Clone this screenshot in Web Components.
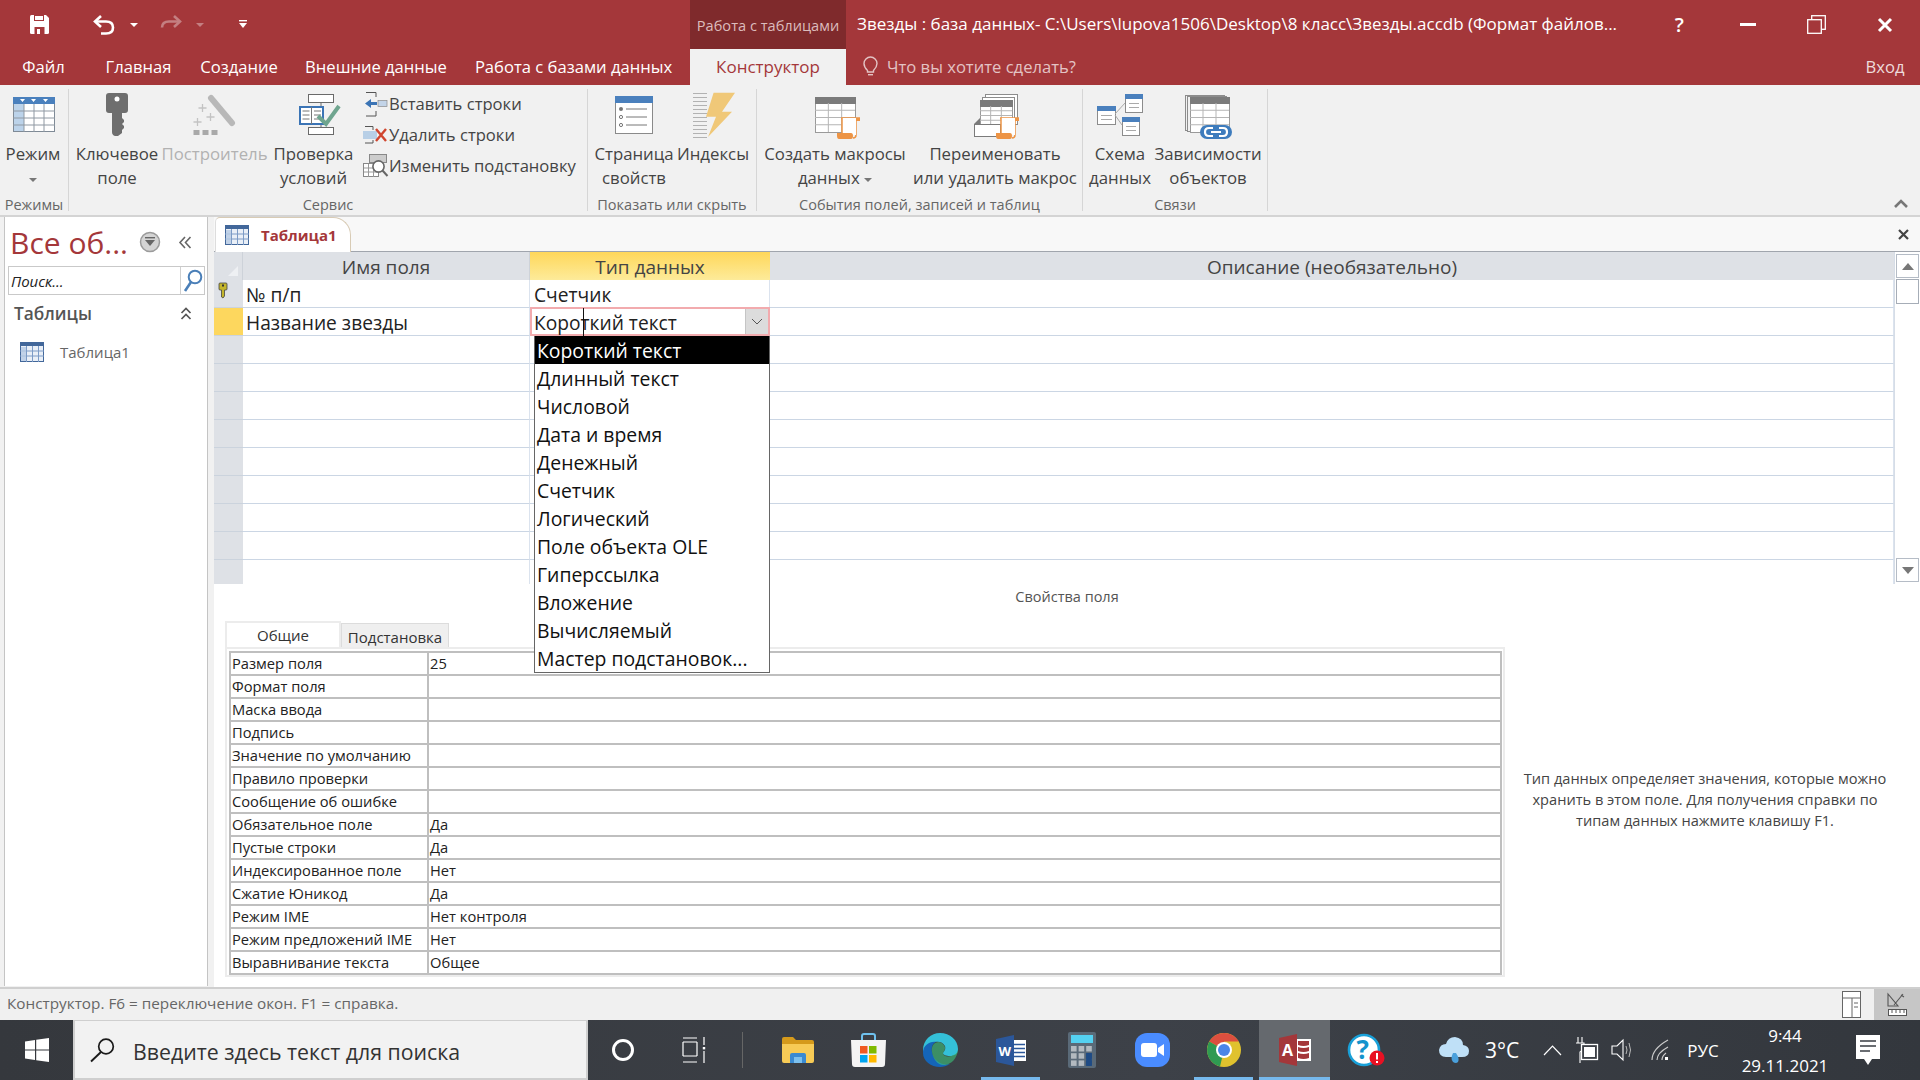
<!DOCTYPE html>
<html lang="ru"><head><meta charset="utf-8"><title>Access</title>
<style>
html,body{margin:0;padding:0;width:1920px;height:1080px;overflow:hidden;background:#fff}
body{font-family:"Open Sans","Noto Sans",sans-serif;color:#444}
</style></head><body>
<ac-app>
  <ac-titlebar></ac-titlebar>
  <ac-tabs></ac-tabs>
  <ac-ribbon>
    <rb-group w="69" label="Режимы" pr="3">
      <rb-btn w="66" icon="sheet">Режим<br><ac-icon name="tri"></ac-icon></rb-btn>
    </rb-group>
    <rb-group w="519" label="Сервис">
      <rb-btn w="96" icon="key">Ключевое<br>поле</rb-btn>
      <rb-btn w="99" icon="wand" disabled>Построитель</rb-btn>
      <rb-btn w="99" icon="valid">Проверка<br>условий</rb-btn>
      <rb-stack>
        <rb-small icon="ins">Вставить строки</rb-small>
        <rb-small icon="del">Удалить строки</rb-small>
        <rb-small icon="look">Изменить подстановку</rb-small>
      </rb-stack>
    </rb-group>
    <rb-group w="169" label="Показать или скрыть">
      <rb-btn w="92" icon="page">Страница<br>свойств</rb-btn>
      <rb-btn w="66" icon="index">Индексы</rb-btn>
    </rb-group>
    <rb-group w="326" label="События полей, записей и таблиц">
      <rb-btn w="156" icon="macro">Создать макросы<br>данных <ac-icon name="tri"></ac-icon></rb-btn>
      <rb-btn w="164" icon="rename">Переименовать<br>или удалить макрос</rb-btn>
    </rb-group>
    <rb-group w="185" label="Связи">
      <rb-btn w="74" icon="schema">Схема<br>данных</rb-btn>
      <rb-btn w="102" icon="deps">Зависимости<br>объектов</rb-btn>
    </rb-group>
    <rb-collapse></rb-collapse>
  </ac-ribbon>
  <ac-body>
    <ac-nav></ac-nav>
    <ac-doc></ac-doc>
  </ac-body>
  <ac-status></ac-status>
  <ac-taskbar></ac-taskbar>
</ac-app>
<script>
const T=(x,y,w,h,f='#fff',s='none',extra='')=>`<rect x="${x}" y="${y}" width="${w}" height="${h}" fill="${f}" stroke="${s}" ${extra}/>`;
const L=(d,s='#888',w=1,extra='')=>`<path d="${d}" fill="none" stroke="${s}" stroke-width="${w}" ${extra}/>`;
const P=(d,f='#888',extra='')=>`<path d="${d}" fill="${f}" ${extra}/>`;
const miniTable=(x,y,w,h,head='#4a80bd')=>T(x+.5,y+.5,w,h,'#fff','#8c8c8c')+T(x,y,w+1,5,head)+L(`M${x+4} ${y+9.5}H${x+w-3}M${x+4} ${y+13.5}H${x+w-3}`,'#aaa');
const grayTable=(x,y,w,h)=>{let g='';for(let i=1;i<3;i++)g+=`M${x+w*i/3} ${y+6}V${y+h}`;for(let i=1;i<4;i++)g+=`M${x} ${y+6+(h-6)*i/4}H${x+w}`;return T(x+.5,y+.5,w,h,'#fff','#9a9a9a')+T(x,y,w+1,7,'#7b7b7b')+L(g,'#b5b5b5')};
const scroll=(x,y)=>L(`M${x+4} ${y+1}H${x+23}M${x+19} ${y+1}V${y+18}Q${x+19} ${y+21} ${x+16} ${y+21}`,'#ed9445',1.5)+T(x+5,y+1,14,17,'#fff')+L(`M${x+5} ${y+1}V${y+16}`,'#ed9445',1.5)+P(`M${x+19} ${y+1}h4v3h-4z`,'#ed9445')+P(`M${x} ${y+16}h14q2 0 2 3t-2 3h-12q-2 0-2-3z`,'#ed9445');
const ICONS={
 save:[19,19,P('M0 1.5Q0 0 1.5 0H16l3 3v14.5Q19 19 17.5 19H1.5Q0 19 0 17.5Z','#fff')+T(4,0,10,6,'#A4373A')+T(5,1,8,4,'#fff')+T(4.5,12,10,7,'#A4373A')+T(7,14,3,5,'#fff')],
 undo:[22,20,L('M8 1L2 6.5L8 12','#fff',2.6)+L('M3 6.5H13Q20 6.5 20 12.5T13 18.5H8','#fff',2.6)],
 redo:[22,20,L('M14 1L20 6.5L14 12','#c47f81',2.6)+L('M19 6.5H9Q2 6.5 2 12.5','#c47f81',2.6)],
 dn:[8,4,P('M0 0H8L4 4Z','#fff')],
 dnf:[8,4,P('M0 0H8L4 4Z','#c47f81')],
 cust:[8,9,T(0,0,8,1.4,'#fff')+P('M0 3H8L4 8Z','#fff')],
 bulb:[15,21,L('M4.5 14.5Q1 11 1 7.5A6.5 6.5 0 0 1 14 7.5Q14 11 10.5 14.5V16H4.5Z','#e3c3c4',1.4)+T(5,18,5,1.4,'#e3c3c4')],
 minw:[16,3,T(0,0,16,3,'#fff')],
 rest:[19,19,T(4.7,.7,13.6,13.6,'none','#fff','stroke-width="1.3"')+T(.7,4.7,13.6,13.6,'#A4373A','#fff','stroke-width="1.3"')],
 closew:[14,14,L('M1 1L13 13M13 1L1 13','#fff',3)],
 tri:[8,4,P('M0 0H8L4 4Z','#777')],
 sheet:[48,48,T(4.5,6.5,41,34,'#fff','#7f8a96')+T(4,6,42,7,'#4a80bd')+P('M11 8h5l-2.5 3zM22 8h5l-2.5 3zM34 8h5l-2.5 3z','#fff')+T(5,13,10,27,'#bcd3ea')+L('M15 13V41M25 13V41M35 13V41M4 20H46M4 27H46M4 34H46','#8f98a2')],
 key:[48,48,P('M16 2H32Q35 2 35 5V19Q35 22 32 22H29V27L31 29V31L29 33L31 35V37L29 39V42L25 45H22Q19 44 19 41V22H16Q13 22 13 19V5Q13 2 16 2Z','#6e6e6e')+`<circle cx="24" cy="8" r="2.5" fill="#fff"/>`],
 wand:[48,48,L('M20 7L41 32','#b8b8b8',6,'stroke-linecap="round"')+T(2.5,39,6,5,'#a9a9a9')+T(11.5,39,6,5,'#a9a9a9')+T(20.5,39,6,5,'#a9a9a9')+L('M11.5 13v8M7.5 17h8M19.5 22v8M15.5 26h8M6.5 27v8M2.5 31h8','#c3c3c3',1.3)],
 valid:[48,48,T(18.5,3.5,25,8,'#fff','#6a6a6a')+T(18.5,36.5,25,7,'#fff','#6a6a6a')+L('M31 12V37','#6a6a6a')+T(10,16,23,17,'#fff','#3b74b5','stroke-width="2"')+L('M21.5 16V33M12.5 20h7M12.5 24h7M12.5 28h7M24 20h7M24 24h7M24 28h7','#777')+L('M28 25L36 33L49 15','#6fa58f',4)],
 page:[48,48,T(5.5,5.5,37,37,'#fff','#8a8a8a')+T(5,5,38,7,'#4a80bd')+`<circle cx="11" cy="18" r="2" fill="#777"/><circle cx="11" cy="26" r="1.6" fill="#fff" stroke="#777"/><circle cx="11" cy="34" r="1.6" fill="#fff" stroke="#777"/>`+L('M16 18H37M16 26H37M16 34H37','#777')],
 index:[48,48,L(Array.from({length:12},(_,i)=>`M4 ${2.5+i*4}H18`).join(''),'#b2b2b2',1.2)+P('M24.6 1.7H46L33 20.7H43L19 46L27 25.7H17Z','#f0c878')],
 macro:[48,48,grayTable(4,6,40,35)+scroll(26,26)],
 rename:[48,48,T(14.5,3.5,32,30,'#fff','#8c8c8c')+T(11.5,6.5,32,30,'#fff','#8c8c8c')+grayTable(9,9,32,25)+T(3.5,33.5,26,12,'#fff','#7b7b7b')+P('M3 33l6-6v6z','#7b7b7b')+scroll(25,26)],
 schema:[48,48,miniTable(1,15,18,18)+miniTable(29,3,17,18)+miniTable(26,26,17,18)+L('M19 23L29 12M19 24L26 34','#aaa')],
 deps:[48,48,T(1.5,4.5,39,35,'#f1f1f1','#8c8c8c')+T(3.5,5.5,39,35,'#f1f1f1','#8c8c8c')+grayTable(6,6,39,35)+T(16,34,32,14,'#3e7cbd','none','rx="7"')+L('M29 37H25Q21 37 21 41T25 45H29M35 37H39Q43 37 43 41T39 45H35M27 41H37','#fff',2.2)],
 ins:[24,26,L('M3 1.5H13V6M3 25H13V20','#555')+P('M2 12.5L8 8V11H14V14H8V17Z','#3b74b5')+T(15,9.5,9,6,'#c3d4e8','#8a8a8a','stroke-width=".7"')],
 del:[24,18,L('M2 .5H10V4M2 17H10V14','#555')+T(0,5,14,8,'#b8cfe6')+L('M13 3L23 15M23 3L13 15','#d0452f',2.4)],
 look:[25,24,T(6.5,.5,17,8,'#ccc','#888')+T(.5,9.5,15,13,'#fff','#888')+L('M5.5 10V23M10.5 10V23M1 14H15M1 18H15','#999')+`<circle cx="15.5" cy="12.5" r="5.6" fill="#fff" stroke="#666" stroke-width="1.6"/>`+L('M19.5 16.5L24.5 22','#666',2)],
 up2:[16,9,L('M2 8L8 2L14 8','#777',2.6)],
 filter:[22,22,`<circle cx="11" cy="11" r="9.5" fill="#d4d4d4" stroke="#9b9b9b" stroke-width="1.5"/>`+T(6,6,10,1.4,'#666')+P('M6 9H16L11 15Z','#666')],
 dbl:[14,13,L('M7 1L2 6.5L7 12M12.5 1L7.5 6.5L12.5 12','#666',1.6)],
 mag:[20,23,`<circle cx="12" cy="8" r="6.3" fill="none" stroke="#4a7fb8" stroke-width="2"/>`+L('M8 13L2 22','#4a7fb8',2.6)],
 updbl:[12,13,L('M1.5 6L6 1.5L10.5 6M1.5 12L6 7.5L10.5 12','#555',1.7)],
 ntable:[24,20,T(.5,.5,23,19,'#e9eff7','#42679a')+T(0,0,24,4,'#42679a')+L('M6.5 4V20M12.5 4V20M18.5 4V20M0 9H24M0 14H24','#7c9bc6')+T(1,5,5,14,'#b7cbe3','none','opacity=".8"')],
 gkey:[10,15,P('M1 1Q1 0 2 0H8Q9 0 9 1V6Q9 7 8 7H6.5V13L5 15L3.5 14V7H2Q1 7 1 6Z','#c4b52a','stroke="#444" stroke-width=".8"')+T(4,1.5,2,2,'#333')],
 corner:[10,10,P('M0 10L10 0V10Z','#eef0f3')],
 chev:[12,7,L('M1 1L6 6L11 1','#555',1)],
 tup:[12,7,P('M0 7L6 0L12 7Z','#777')],
 tdn:[12,7,P('M0 0L6 7L12 0Z','#777')],
 x:[11,11,L('M1 1L10 10M10 1L1 10','#444',2.2)],
 st1:[19,27,T(.5,.5,18,26,'#fff','#666')+L('M0 7H19M10 7V27','#666')+L('M12 12H16M12 16H16','#666')],
 st2:[21,24,L('M1 1V13L11 13ZM7 12L16 1M14 2L17 4','#555',1.1)+T(1.5,16.5,18,6,'#fff','#555')+L('M5 17V20M9 17V20M13 17V20M17 17V20','#555')],
 win:[24,24,P('M0 3.4L10 2V11.4H0ZM11.2 1.8L24 0V11.4H11.2ZM0 12.6H10V22L0 20.6ZM11.2 12.6H24V24L11.2 22.2Z','#fff')],
 smag:[26,24,`<circle cx="16" cy="8.5" r="7.3" fill="none" stroke="#1b1b1b" stroke-width="1.7"/>`+L('M11 14L1 23.5','#1b1b1b',1.9)],
 ring:[22,24,`<circle cx="11" cy="12" r="9.5" fill="none" stroke="#fff" stroke-width="3"/>`],
 task:[24,26,L('M0 1H14M0 5H14M0 19H14M0 25H14M0 5V19','#fff',1.2)+L('M14 5V19','#fff',1.2)+L('M21 0V8M21 14V26','#fff',1.2)+T(19.8,10,2.4,2.4,'#fff')],
 folder:[32,26,P('M0 2Q0 0 2 0H11L14 3H30Q32 3 32 5V8H0Z','#d59a1b')+P('M0 7H32V24Q32 26 30 26H2Q0 26 0 24Z','#f7cb56')+P('M8 26V18Q8 16 10 16H22Q24 16 24 18V26H20V20H12V26Z','#3a8ad2')+T(12,20,8,6,'#7cc0ee')],
 store:[35,34,L('M11 8V3Q11 1 13 1H22Q24 1 24 3V8','#6fc1ee',2)+P('M0 7H35L34 31Q34 34 31 34H4Q1 34 1 31Z','#f4f4f4')+T(9,13,7.5,7.5,'#f05a22')+T(18,13,7.5,7.5,'#7fba00')+T(9,22,7.5,7.5,'#00a4ef')+T(18,22,7.5,7.5,'#ffb900')],
 edge:[36,34,P('M1 17C1 7 9 0 18 0C28 0 36 7 36 16C36 21 32 23 28 23C24 23 21 22 21 20C22 18 24 17 23 13C21 9 17 8 13 9C7 11 1 15 1 22Z','#34c0d8')+P('M1 20C1 12 8 8 14 9C11 10 9 14 10 19C11 27 19 33 28 31C25 33 21 34 18 34C9 34 1 28 1 20Z','#1565b8')+P('M10 19C9 13 12 9 17 9C21 10 23 13 23 15C23 18 21 19 21 20C21 23 25 24 29 23C33 22 35 20 36 17C35 25 30 31 23 32C16 33 11 26 10 19Z','#3cd07f','opacity=".55"')],
 word:[30,31,T(16,5,14,21,'#fff')+L('M18 9.5H29M18 13.5H29M18 17.5H29M18 21.5H29','#2b579a',1.5)+P('M0 4L18 0V31L0 27Z','#2b579a')+`<text x="2.5" y="20.5" font-family="Open Sans,sans-serif" font-size="13" font-weight="700" fill="#fff">W</text>`],
 calc:[28,36,T(0,0,28,36,'#5a6a78','none','rx="2"')+T(3,3,22,8,'#54d1f1')+Array.from({length:9},(_,i)=>T(3+(i%3)*7.6,14+Math.floor(i/3)*7.2,5.6,5.5,i%3==2&&i>2?'#1f4b85':'#b3bac0')).join('')+T(18.2,21,5.6,12.7,'#1f4b85')],
 zoom:[35,34,T(0,0,35,34,'#4a8cff','none','rx="12"')+T(6,10,16,14,'#fff','none','rx="3"')+P('M23 15L29 11V23L23 19Z','#fff')],
 chrome:[34,34,`<circle cx="17" cy="17" r="17" fill="#e0c22e"/>`+P('M17 17L2.3 8.5A17 17 0 0 1 31.7 8.5H17Z','#dc4f3f')+P('M17 17L2.3 8.5A17 17 0 0 0 13 33.5L17 17Z','#2f9a52')+`<circle cx="17" cy="17" r="8" fill="#fff"/><circle cx="17" cy="17" r="6" fill="#4a86e8"/>`],
 access:[32,32,T(16,5,16,22,'#fff')+P('M19 7H30V11Q24.5 13 19 11ZM19 13Q24.5 15 30 13V17Q24.5 19 19 17ZM19 19Q24.5 21 30 19V24Q24.5 26 19 24Z','#a4373a')+P('M0 4L18 0V32L0 28Z','#a4373a')+`<text x="3" y="21.5" font-family="Open Sans,sans-serif" font-size="16" font-weight="700" fill="#fff">A</text>`],
 help:[36,34,`<circle cx="16" cy="17" r="15" fill="#fff" stroke="#19a0d8" stroke-width="2.6"/><text x="8.5" y="26" font-family="Open Sans,sans-serif" font-size="26" font-weight="700" fill="#1593cc">?</text><circle cx="29" cy="25" r="7.5" fill="#e81123"/>`+T(28,20,2,6.5,'#fff')+T(28,28,2,2,'#fff')],
 cloud:[30,30,P('M7 22Q0 22 0 15Q1 9 7 9Q9 2 16 2Q24 3 24 10Q30 11 30 16Q30 22 23 22Z','#bfe0f7')+P('M14 18Q11 24 14 27Q17 29 19 27Q21 24 17 18Z','#4aa0dc')],
 chup:[19,11,L('M1 10L9.5 1L18 10','#fff',1.2)],
 batt:[23,26,L('M3 0V6M7 0V6M1 6H9V12L5 15V26','#fff',1.1)+T(6.5,7.5,16,15,'#3b3f45','#fff','stroke-width="1.3"')+T(9,10,11,10,'#fff')],
 vol:[20,26,P('M0 9H5L11 3V23L5 17H0Z','none','stroke="#fff" stroke-width="1.1"')+L('M14 9Q16 13 14 17M17 6Q20 13 17 20','#bbb',1)],
 wifi:[18,22,L('M1 21Q1 10 17 1M6 21Q6 14 17 8M11 21Q11 17 15 14','#ccc',1.2)+T(14,18,3,3,'#fff')],
 note:[24,30,P('M0 0H24V24H16L12 30L8 24H0Z','#fff')+L('M4 6H20M4 11H20M4 16H14','#3a3e44',1.4)],
};
customElements.define('ac-icon',class extends HTMLElement{constructor(){super();const s=this.attachShadow({mode:'open'});const [w,h,c]=ICONS[this.getAttribute('name')];
 s.innerHTML=`<style>:host{display:inline-block;width:${w}px;height:${h}px;line-height:0;vertical-align:middle}svg{display:block;overflow:visible}</style><svg width="${w}" height="${h}" viewBox="0 0 ${w} ${h}">${c}</svg>`}});
const def=(name,css,html)=>customElements.define(name,class extends HTMLElement{constructor(){super();const h=typeof html==='function'?html(this):html;this.attachShadow({mode:'open'}).innerHTML=`<style>${css}</style>${h}`}});
def('ac-app',':host{display:flex;flex-direction:column;width:1920px;height:1080px;overflow:hidden}','<slot></slot>');
def('ac-titlebar',`:host{display:flex;align-items:center;height:49px;background:#a4373a;color:#fff;flex:none}
.q{display:flex;align-items:center;width:690px;height:100%;box-sizing:border-box}
.ctx{width:156px;height:49px;background:#7f2a2c;color:#dcbcbd;font-size:14.6px;display:flex;align-items:center;justify-content:center;white-space:nowrap;flex:none}
.t{width:790px;margin-left:11px;font-size:17px;white-space:nowrap;flex:none;padding-bottom:2px}
.c{display:flex;align-items:center;flex:1;justify-content:flex-start}
.b{width:68.5px;display:flex;justify-content:center;align-items:center;font-size:20px;font-weight:600;flex:none;height:30px}
ac-icon.s{margin-left:30px}ac-icon.u{margin-left:44px}ac-icon.d1{margin-left:15px}ac-icon.r{margin-left:22px}ac-icon.d2{margin-left:14px}ac-icon.cu{margin-left:35px}`,
`<div class="q"><ac-icon class="s" name="save"></ac-icon><ac-icon class="u" name="undo"></ac-icon><ac-icon class="d1" name="dn"></ac-icon><ac-icon class="r" name="redo"></ac-icon><ac-icon class="d2" name="dnf"></ac-icon><ac-icon class="cu" name="cust"></ac-icon></div>
<div class="ctx">Работа с таблицами</div>
<div class="t">Звезды : база данных- C:\\Users\\lupova1506\\Desktop\\8 класс\\Звезды.accdb (Формат файлов...</div>
<div class="c"><div class="b" style="margin-left:-2px">?</div><div class="b"><ac-icon name="minw"></ac-icon></div><div class="b"><ac-icon name="rest"></ac-icon></div><div class="b"><ac-icon name="closew"></ac-icon></div></div>`);
def('ac-tabs',`:host{display:flex;align-items:center;height:36px;background:#a4373a;color:#fff;font-size:16.6px;flex:none;white-space:nowrap}
div{display:flex;align-items:center;justify-content:center;height:36px;flex:none;padding-bottom:1px;box-sizing:border-box}
.a{background:#f1f1f1;color:#a4373a;margin-left:7px;font-size:17px}
.s{color:#e3c3c4;margin-left:17px;gap:9px}.v{margin-left:auto;width:60px;color:#eedcdc;padding-right:10px}`,
`<div style="width:87px">Файл</div><div style="width:103px">Главная</div><div style="width:98px">Создание</div><div style="width:176px">Внешние данные</div><div style="width:219px">Работа с базами данных</div><div class="a" style="width:156px">Конструктор</div><div class="s"><ac-icon name="bulb"></ac-icon><span>Что вы хотите сделать?</span></div><div class="v">Вход</div>`);
def('ac-ribbon',`:host{display:flex;background:#f1f1f1;border-bottom:2px solid #d4d4d4;box-sizing:content-box;flex:none;height:130px;position:relative}`,'<slot></slot>');
def('rb-group',`:host{display:flex;flex-direction:column;box-sizing:border-box;height:122px;margin-top:4px;border-right:1px solid #d6d6d6;flex:none}
.m{flex:1;display:flex}.l{height:24px;line-height:29px;text-align:center;font-size:14.5px;color:#666;white-space:nowrap}`,
e=>`<style>:host{width:${e.getAttribute('w')}px}.m{padding-right:${e.getAttribute('pr')||0}px}</style><div class="m"><slot></slot></div><div class="l">${e.getAttribute('label')}</div>`);
def('rb-btn',`:host{display:flex;flex-direction:column;align-items:center;flex:none;font-size:16.8px;line-height:24px;color:#444;text-align:center;white-space:nowrap;padding-top:2px;box-sizing:border-box}
:host([disabled]){color:#b2b2b2}
.i{height:48px;margin-bottom:3px}`,
e=>`<style>:host{width:${e.getAttribute('w')}px}</style><div class="i"><ac-icon name="${e.getAttribute('icon')}"></ac-icon></div><div><slot></slot></div>`);
def('rb-stack',`:host{display:flex;flex-direction:column;margin-top:-1px;flex:none}`,'<slot></slot>');
def('rb-small',`:host{display:flex;align-items:center;height:31px;font-size:16.6px;color:#444;white-space:nowrap}.i{width:26px;flex:none;display:flex}`,
e=>`<div class="i"><ac-icon name="${e.getAttribute('icon')}"></ac-icon></div><slot></slot>`);
def('rb-collapse',`:host{position:absolute;right:11px;bottom:7px;line-height:0}`,'<ac-icon name="up2"></ac-icon>');
def('ac-body',`:host{display:flex;flex:1;min-height:0;background:#f1f1f1}`,'<slot></slot>');
def('ac-nav',`:host{display:flex;flex-direction:column;box-sizing:border-box;width:204px;margin-left:4px;margin-right:6px;background:#fff;border-left:1px solid #c4c4c4;border-right:1px solid #c4c4c4;flex:none;height:769px}
.h{display:flex;align-items:center;height:48px;padding-left:5px;padding-top:2px;box-sizing:border-box;color:#a4373a;font-size:30px;white-space:nowrap}
.h ac-icon:first-of-type{margin-left:11px}.h ac-icon:last-of-type{margin-left:17px}
.s{display:flex;align-items:center;height:29px;width:197px;margin:1px 0 0 3px;border:1px solid #c9c9c9;box-sizing:border-box;font-style:italic;font-size:15px;color:#222}
.s span{flex:1;padding-left:2px}.s i{display:flex;width:23px;height:100%;border-left:1px solid #d0d0d0;align-items:center;justify-content:center}
.g{display:flex;align-items:center;justify-content:space-between;height:34px;margin-top:1px;padding:0 15px 0 9px;font-size:17.3px;font-weight:600;color:#555}
.o{display:flex;align-items:center;height:44px;padding-left:15px;gap:16px;font-size:15px;color:#666}`,
`<div class="h">Все об...<ac-icon name="filter"></ac-icon><ac-icon name="dbl"></ac-icon></div>
<div class="s"><span>Поиск...</span><i><ac-icon name="mag"></ac-icon></i></div>
<div class="g"><span>Таблицы</span><ac-icon name="updbl"></ac-icon></div>
<div class="o"><ac-icon name="ntable"></ac-icon><span>Таблица1</span></div>`);
def('ac-doc',`:host{display:flex;flex-direction:column;flex:1;min-width:0;background:#fff;position:relative;height:770px}
.bar{display:flex;height:35px;background:#f8f8f8;border-bottom:1px solid #a0a5ad;box-sizing:border-box;align-items:flex-end;justify-content:space-between;flex:none}
.tab{display:flex;align-items:center;gap:12px;height:35px;width:136px;margin-left:1px;box-sizing:border-box;margin-bottom:-1px;padding-left:9px;background:#fff;border:1px solid #d8cbb5;border-bottom:none;border-left-color:#ddd;border-radius:5px 18px 0 0;color:#a4373a;font-weight:700;font-size:15px}
.x{align-self:center;margin-right:11px;line-height:0}
.caret{position:absolute;left:368.5px;top:91px;width:1px;height:28px;background:#111}`,
`<div class="bar"><div class="tab"><ac-icon name="ntable"></ac-icon>Таблица1</div><div class="x"><ac-icon name="x"></ac-icon></div></div>
<ac-grid></ac-grid><ac-lower></ac-lower><ac-drop></ac-drop><div class="caret"></div>`);
def('ac-grid',`:host{display:flex;height:332px;flex:none;font-size:19.2px;color:#222;overflow:hidden}
.t{flex:none;width:1680px;display:grid;grid-template-columns:29px 287px 240px 1124px;grid-auto-rows:28px;align-content:start}
.h{background:#dee1e6;color:#444;display:flex;align-items:center;justify-content:center;border-right:1px solid #cdd2d9;box-sizing:border-box;font-size:19px;padding-top:2px}
.h.y{background:linear-gradient(#ffd75a,#fdeb9a);border-right:none}
.c{border-bottom:1px solid #cbd6e4;border-right:1px solid #dbe3ee;box-sizing:border-box;display:flex;align-items:center;padding-left:4px;padding-top:2px;white-space:nowrap}
.n{background:#dee1e6;border-bottom:1px solid #cbd3dd;box-sizing:border-box;display:flex;justify-content:flex-start;padding:3px 0 0 4px}
.n.y{background:#fdd75e}
.h.cr{justify-content:flex-end;align-items:flex-end;padding:0 4px 4px 0}
.cur{border:2px solid #f2abae;padding-left:2px;padding-top:0;justify-content:space-between;padding-right:0;margin-top:-1px;height:29px}
.cur b{font-weight:400;padding-top:2px}.cur i{display:flex;align-items:center;justify-content:center;width:23px;height:100%;background:#dcdcdc;border-left:1px solid #c5c5c5;box-sizing:border-box}
.sb{flex:1;display:flex;flex-direction:column;background:#fff;box-sizing:border-box;padding:2px 1px 2px 1px;border-left:1px solid #d6dde7}
.bt{height:24px;border:1px solid #b5bcc6;display:flex;align-items:center;justify-content:center;box-sizing:border-box;flex:none}
.th{height:25px;border:1px solid #a6adb7;margin-top:1px;box-sizing:border-box;flex:none}.sp{flex:1}`,
`<div class="t"><div class="h cr"><ac-icon name="corner"></ac-icon></div><div class="h">Имя поля</div><div class="h y">Тип данных</div><div class="h" style="border-right:none">Описание (необязательно)</div>
<div class="n"><ac-icon name="gkey"></ac-icon></div><div class="c" style="padding-left:3px">№ п/п</div><div class="c">Счетчик</div><div class="c"></div>
<div class="n y"></div><div class="c" style="padding-left:3px">Название звезды</div><div class="c cur"><b>Короткий текст</b><i><ac-icon name="chev"></ac-icon></i></div><div class="c"></div>
${Array.from({length:9},()=>'<div class="n"></div><div class="c"></div><div class="c"></div><div class="c"></div>').join('')}</div>
<div class="sb"><div class="bt"><ac-icon name="tup"></ac-icon></div><div class="th"></div><div class="sp"></div><div class="bt"><ac-icon name="tdn"></ac-icon></div></div>`);
def('ac-drop',`:host{position:absolute;left:320px;top:119px;width:236px;box-sizing:border-box;border:1px solid #666;border-top:none;background:#fff;font-size:19.4px;color:#111;display:block}
div{height:28px;line-height:29px;padding-left:2px;white-space:nowrap}.a{background:#000;color:#fff}`,
['Короткий текст','Длинный текст','Числовой','Дата и время','Денежный','Счетчик','Логический','Поле объекта OLE','Гиперссылка','Вложение','Вычисляемый','Мастер подстановок...'].map((t,i)=>`<div class="${i?'':'a'}">${t}</div>`).join(''));
def('ac-lower',`:host{display:flex;flex-direction:column;flex:1;min-height:0}
.ti{height:37px;line-height:26px;text-align:center;font-size:14.5px;color:#555;flex:none}
.main{display:flex;flex:1;padding-left:11px}
.left{width:1280px;flex:none}
.tabs{display:flex;align-items:flex-end;height:29px;margin-bottom:-3px;position:relative;font-size:15px;color:#333}
.tabs div{display:flex;align-items:center;justify-content:center;box-sizing:border-box}
.g{width:116px;height:29px;border:2px solid #ececec;border-bottom:none;background:#fff;padding-bottom:3px}
.p{width:108px;height:27px;border:1px solid #dcdcdc;background:#efefef;border-bottom:none}
.help{width:400px;box-sizing:border-box;padding:118px 16px 0 16px;font-size:14.6px;line-height:21px;color:#444;text-align:center;margin-top:29px}`,
`<div class="ti">Свойства поля</div><div class="main"><div class="left"><div class="tabs"><div class="g">Общие</div><div class="p">Подстановка</div></div><ac-props></ac-props></div><div class="help">Тип данных определяет значения, которые можно хранить в этом поле. Для получения справки по типам данных нажмите клавишу F1.</div></div>`);
def('ac-props',`:host{display:block;border:2px solid #ececec;padding:2px 1px 0 2px;box-sizing:border-box;width:1280px;background:#fff;position:relative}
.t{display:grid;grid-template-columns:196px 1fr;grid-auto-rows:21px;gap:2px;background:#bfbfbf;padding:2px;font-size:14.7px;color:#222}
.t div{background:#fff;line-height:20px;padding-left:1px;white-space:nowrap;overflow:hidden}`,
`<div class="t">${[['Размер поля','25'],['Формат поля',''],['Маска ввода',''],['Подпись',''],['Значение по умолчанию',''],['Правило проверки',''],['Сообщение об ошибке',''],['Обязательное поле','Да'],['Пустые строки','Да'],['Индексированное поле','Нет'],['Сжатие Юникод','Да'],['Режим IME','Нет контроля'],['Режим предложений IME','Нет'],['Выравнивание текста','Общее']].map(r=>`<div>${r[0]}</div><div>${r[1]}</div>`).join('')}</div>`);
def('ac-status',`:host{display:flex;align-items:center;height:33px;background:#f0f0f0;border-top:2px solid #cfcfcf;box-sizing:border-box;flex:none;font-size:15.3px;color:#666;padding-left:7px}
span{flex:1;padding-bottom:3px}.b{width:46px;height:31px;display:flex;align-items:center;justify-content:center;flex:none}.on{background:#c6c6c6}`,
`<span>Конструктор. F6 = переключение окон. F1 = справка.</span><div class="b"><ac-icon name="st1"></ac-icon></div><div class="b on"><ac-icon name="st2"></ac-icon></div>`);
def('ac-taskbar',`:host{display:flex;height:60px;flex:none;background:linear-gradient(90deg,#35383d,#3d4148 60%,#33373d);color:#fff;align-items:stretch}
.w{width:73px;display:flex;align-items:center;justify-content:center;flex:none}
.se{width:515px;background:#f2f2f2;border:2px solid #cfcfcf;border-top-width:1px;box-sizing:border-box;display:flex;align-items:center;flex:none;color:#333;font-size:21.3px;padding-left:15px;gap:17px;white-space:nowrap}
.se span{padding-top:4px}
.c{display:flex;align-items:center;justify-content:center;flex:none;position:relative}
.app{width:71px}
.on::after{content:"";position:absolute;left:6px;right:6px;bottom:0;height:3px;background:#76b9ed}
.act{background:#65696e}.act.on::after{left:0;right:0}
.sep{width:1px;background:#666;margin:12px 19px 12px 11px;flex:none}
.tx{font-size:21px}.ru{font-size:17px}
.cl{width:112px;display:flex;flex-direction:column;align-items:center;justify-content:space-between;padding:4px 0 2px;box-sizing:border-box;font-size:17px;line-height:24px;flex:none}`,
`<div class="w"><ac-icon name="win"></ac-icon></div>
<div class="se"><ac-icon name="smag"></ac-icon><span>Введите здесь текст для поиска</span></div>
<div class="c" style="width:70px"><ac-icon name="ring"></ac-icon></div>
<div class="c" style="width:73px"><ac-icon name="task"></ac-icon></div><div class="sep"></div>
<div class="c app"><ac-icon name="folder"></ac-icon></div><div class="c app"><ac-icon name="store"></ac-icon></div><div class="c app"><ac-icon name="edge"></ac-icon></div>
<div class="c app on"><ac-icon name="word"></ac-icon></div><div class="c app"><ac-icon name="calc"></ac-icon></div><div class="c app"><ac-icon name="zoom"></ac-icon></div>
<div class="c app on"><ac-icon name="chrome"></ac-icon></div><div class="c app on act"><ac-icon name="access"></ac-icon></div><div class="c app"><ac-icon name="help"></ac-icon></div>
<div class="c" style="width:37px"></div><div class="c" style="width:32px"><ac-icon name="cloud"></ac-icon></div>
<div class="c tx" style="width:64px">3°C</div><div class="c" style="width:36px"><ac-icon name="chup"></ac-icon></div>
<div class="c" style="width:32px"><ac-icon name="batt"></ac-icon></div><div class="c" style="width:40px"><ac-icon name="vol"></ac-icon></div>
<div class="c" style="width:36px"><ac-icon name="wifi"></ac-icon></div><div class="c ru" style="width:50px">РУС</div>
<div class="cl" style="margin-left:1px"><span>9:44</span><span>29.11.2021</span></div>
<div class="c" style="width:54px"><ac-icon name="note"></ac-icon></div>`);
</script>
</body></html>
